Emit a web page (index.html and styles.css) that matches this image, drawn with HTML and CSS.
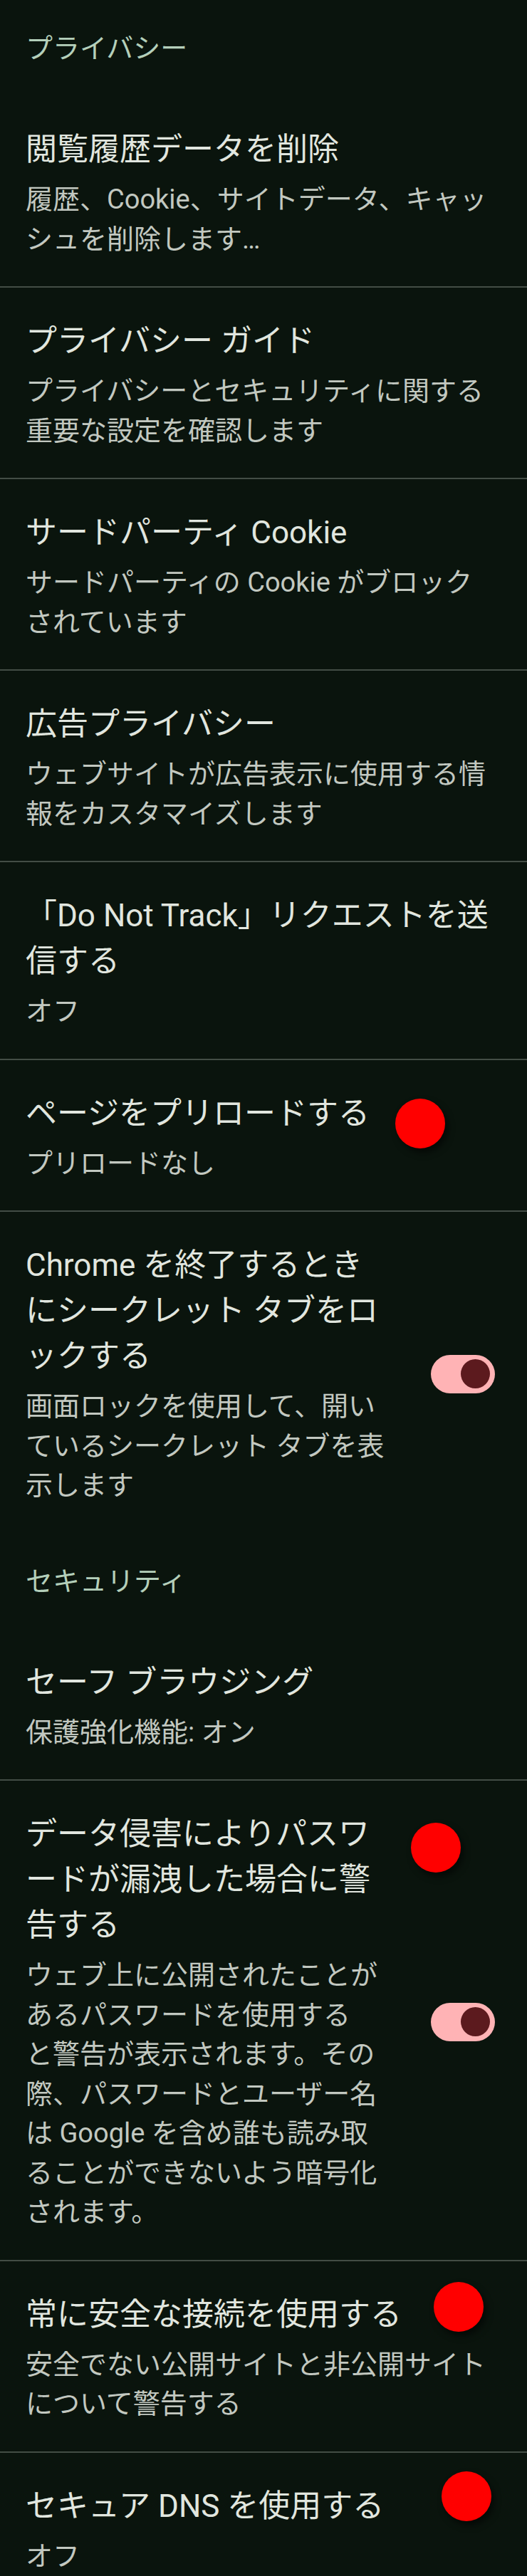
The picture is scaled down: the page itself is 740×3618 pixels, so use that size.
FILE: index.html
```html
<!DOCTYPE html>
<html lang="ja">
  <head>
    <meta charset="UTF-8" />
    <meta name="viewport" content="width=device-width, initial-scale=1.0" />
    <title>プライバシーとセキュリティ</title>
    <link rel="stylesheet" href="styles.css">
  </head>
  <body>
    <div class="settings">
      <div class="category">プライバシー</div>

      <div class="pref">
        <div class="pref-text">
          <div class="pref-title">閲覧履歴データを削除</div>
          <div class="pref-summary">履歴、Cookie、サイトデータ、キャッシュを削除します…</div>
        </div>
      </div>

      <div class="pref">
        <div class="pref-text">
          <div class="pref-title">プライバシー ガイド</div>
          <div class="pref-summary">プライバシーとセキュリティに関する重要な設定を確認します</div>
        </div>
      </div>

      <div class="pref">
        <div class="pref-text">
          <div class="pref-title">サードパーティ Cookie</div>
          <div class="pref-summary">サードパーティの Cookie がブロックされています</div>
        </div>
      </div>

      <div class="pref">
        <div class="pref-text">
          <div class="pref-title">広告プライバシー</div>
          <div class="pref-summary">ウェブサイトが広告表示に使用する情報をカスタマイズします</div>
        </div>
      </div>

      <div class="pref">
        <div class="pref-text">
          <div class="pref-title">「Do Not Track」リクエストを送信する</div>
          <div class="pref-summary">オフ</div>
        </div>
      </div>

      <div class="pref">
        <div class="pref-text">
          <div class="pref-title">ページをプリロードする</div>
          <div class="pref-summary">プリロードなし</div>
        </div>
        <span class="dot dot-preload"></span>
      </div>

      <div class="pref no-divider">
        <div class="pref-text">
          <div class="pref-title">Chrome を終了するときにシークレット タブをロックする</div>
          <div class="pref-summary">画面ロックを使用して、開いているシークレット タブを表示します</div>
        </div>
        <div class="switch"><span class="switch-thumb"></span></div>
      </div>

      <div class="category">セキュリティ</div>

      <div class="pref">
        <div class="pref-text">
          <div class="pref-title">セーフ ブラウジング</div>
          <div class="pref-summary">保護強化機能: オン</div>
        </div>
      </div>

      <div class="pref">
        <div class="pref-text">
          <div class="pref-title">データ侵害によりパスワードが漏洩した場合に警告する</div>
          <div class="pref-summary">ウェブ上に公開されたことがあるパスワードを使用する<br>と警告が表示されます。その際、パスワードとユーザー名は Google を含め誰も読み取ることができないよう暗号化されます。</div>
        </div>
        <div class="switch"><span class="switch-thumb"></span></div>
        <span class="dot dot-breach"></span>
      </div>

      <div class="pref">
        <div class="pref-text">
          <div class="pref-title">常に安全な接続を使用する</div>
          <div class="pref-summary">安全でない公開サイトと非公開サイトについて警告する</div>
        </div>
        <span class="dot dot-https"></span>
      </div>

      <div class="pref">
        <div class="pref-text">
          <div class="pref-title">セキュア DNS を使用する</div>
          <div class="pref-summary">オフ</div>
        </div>
        <span class="dot dot-dns"></span>
      </div>
    </div>
  </body>
</html>
```

FILE: styles.css
```css
html {
  background: #0a140d;
}

body {
  margin: 0;
  background: #0a140d;
  font-family: Roboto, "Noto Sans CJK JP", sans-serif;
  line-break: normal;
  overflow: hidden;
}

.category {
  padding: 40px 40px 39px 36px;
  font-size: 38px;
  line-height: 56px;
  color: #b4cfba;
}

/* One preference row */
.pref {
  position: relative;
  display: flex;
  align-items: center;
  padding: 43px 40px 38px 36px;
  border-bottom: 2px solid #434d45;
}

.pref.no-divider {
  border-bottom: none;
}

.pref-text {
  flex: 1;
  min-width: 0;
}

.pref-title {
  font-size: 44px;
  line-height: 64px;
  color: #e1e6df;
}

.pref-summary {
  margin-top: 11px;
  font-size: 38px;
  line-height: 55.5px;
  color: #c2c8c0;
}

/* Switch, on state */
.switch {
  flex: none;
  box-sizing: border-box;
  width: 90px;
  height: 54px;
  margin: 0 5px 0 59px;
  padding-right: 7px;
  border-radius: 27px;
  background: #ffb3b5;
  display: flex;
  align-items: center;
  justify-content: flex-end;
}

.switch-thumb {
  width: 41px;
  height: 41px;
  border-radius: 50%;
  background: #5c1a1e;
}

/* Loose red thumbs drawn over the rows */
.dot {
  position: absolute;
  width: 70px;
  height: 70px;
  border-radius: 50%;
  background: #ff0000;
  box-shadow: 4px 6px 10px rgba(0, 0, 0, 0.55);
}

.dot-preload {
  left: 555px;
  top: 54px;
}

.dot-breach {
  left: 577px;
  top: 59px;
}

.dot-https {
  left: 609px;
  top: 29px;
}

.dot-dns {
  left: 620px;
  top: 26px;
}
```
